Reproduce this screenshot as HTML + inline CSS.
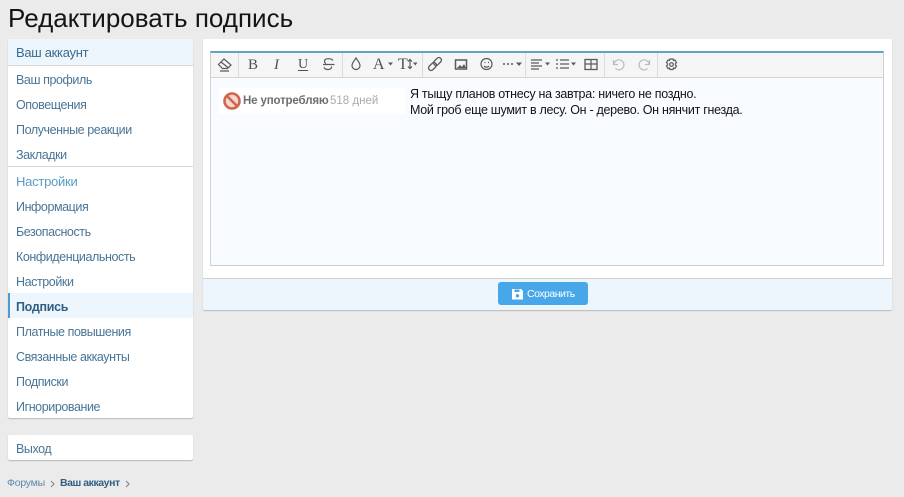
<!DOCTYPE html>
<html><head><meta charset="utf-8"><style>
*{box-sizing:border-box}
html,body{margin:0;padding:0}
body{width:904px;height:497px;background:#ebebeb;position:relative;overflow:hidden;font-family:"Liberation Sans","DejaVu Sans",sans-serif;font-size:13px;color:#141414}
.a{position:absolute;white-space:nowrap}
.card{position:absolute;background:#fff;border-radius:2px;box-shadow:0 1px 1px rgba(0,0,0,.22)}
.n{position:absolute;left:16px;color:#4a7596;font-size:12.5px;letter-spacing:-.42px;line-height:16px;white-space:nowrap}
svg{position:absolute;overflow:visible;fill:none;stroke:#5a5a5a;stroke-width:1.2}
.sep{position:absolute;top:53px;width:1px;height:24px;background:#dcdcdc}
.t{position:absolute;color:#505050;line-height:16px;white-space:nowrap}
</style></head><body>
<div class="a" style="left:8px;top:1px;font-size:26px;line-height:34px;color:#141414">Редактировать подпись</div>

<div class="card" style="left:8px;top:39px;width:185px;height:379px"></div>
<div class="a" style="left:8px;top:39px;width:185px;height:27px;background:#edf6fd;border-bottom:1px solid #d8d8d8"></div>
<div class="n" style="top:45px;color:#396b8e;font-size:13px;letter-spacing:-.3px">Ваш аккаунт</div>
<div class="n" style="top:72px">Ваш профиль</div>
<div class="n" style="top:97px">Оповещения</div>
<div class="n" style="top:122px">Полученные реакции</div>
<div class="n" style="top:147px">Закладки</div>
<div class="a" style="left:8px;top:166px;width:185px;height:1px;background:#d8d8d8"></div>
<div class="n" style="top:174px;color:#5b9ac4;font-size:13px;letter-spacing:-.25px">Настройки</div>
<div class="n" style="top:199px">Информация</div>
<div class="n" style="top:224px">Безопасность</div>
<div class="n" style="top:249px">Конфиденциальность</div>
<div class="n" style="top:274px">Настройки</div>
<div class="a" style="left:8px;top:293px;width:185px;height:25px;background:#edf6fd;border-left:2px solid #4d9ccf"></div>
<div class="n" style="top:299px;font-weight:bold;color:#2f5f85;letter-spacing:-.3px">Подпись</div>
<div class="n" style="top:324px">Платные повышения</div>
<div class="n" style="top:349px">Связанные аккаунты</div>
<div class="n" style="top:374px">Подписки</div>
<div class="n" style="top:399px">Игнорирование</div>

<div class="card" style="left:8px;top:435px;width:185px;height:25px"></div>
<div class="n" style="top:441px">Выход</div>

<div class="a" style="left:7px;top:477px;font-size:10.5px;letter-spacing:-.25px;line-height:13px;color:#5b8aad">Форумы</div>
<div class="a" style="left:60px;top:477px;font-size:10.5px;letter-spacing:-.45px;line-height:13px;font-weight:bold;color:#2f5f85">Ваш аккаунт</div>
<svg style="left:0;top:0;stroke:#8c8c8c" width="904" height="497"><path d="M51 481l3 3-3 3M126 481l3 3-3 3"/></svg>

<div class="card" style="left:203px;top:39px;width:689px;height:271px"></div>
<div class="a" style="left:203px;top:278px;width:689px;height:32px;background:#edf5fd;border-top:1px solid #d0d0d0;border-radius:0 0 2px 2px"></div>
<div class="a" style="left:210px;top:51px;width:674px;height:215px;border:1px solid #cfcfcf;border-top:2px solid #5fa6c4;background:#f8fbff"></div>
<div class="a" style="left:211px;top:53px;width:672px;height:25px;background:#f5f5f5;border-bottom:1px solid #d4d4d4"></div>
<div class="a" style="left:219px;top:88px;width:186px;height:26px;background:#fff"></div>

<div class="sep" style="left:238px"></div><div class="sep" style="left:342px"></div><div class="sep" style="left:422px"></div><div class="sep" style="left:525px"></div><div class="sep" style="left:604px"></div><div class="sep" style="left:657px"></div>

<svg style="left:0;top:0" width="904" height="497">
<path d="M218.500 64.500l5.500-5.500 7 6-3.500 3.500h-5zM221 62l7 5.500M220 71h9"/>
<path d="M333 60.500c-1-1.300-2.500-1.800-4.500-1.800-2.500 0-4 1-4 2.600 0 1 .5 1.800 1.500 2.200M323 64.500h11.500M331.500 66.500c.3 2-1.300 3-3.500 3-2 0-3.500-.7-4-2.200"/>
<path d="M356 58c2 3 4 5 4 7.500a4 4 0 0 1-8 0c0-2.500 2-4.500 4-7.500z"/>
<rect x="-4.500" y="-2.500" width="9" height="5" rx="2.500" transform="translate(432.500 66.500) rotate(-45)" stroke-width="1.300"/>
<rect x="-4.500" y="-2.500" width="9" height="5" rx="2.500" transform="translate(437.500 61.500) rotate(-45)" stroke-width="1.300"/>
<rect x="455.500" y="60" width="11" height="9" stroke-width="1.500"/><path d="M457 68l3-3 2 2 2-3 2 4z" fill="#5a5a5a" stroke="none"/>
<circle cx="486.500" cy="64" r="5.500"/><path d="M484 66c1 1.500 4 1.500 5 0"/><path d="M484.500 62.500h1M488 62.500h1"/>
<path d="M503 64h2M507 64h2M511 64h2" stroke-width="1.600"/>
<path d="M516 62.500h6l-3 3.500zM388 62.500h5l-2.500 3zM413 62.500h4.500l-2.200 3zM545 62.500h5l-2.500 3zM571 62.500h5l-2.500 3z" fill="#5a5a5a" stroke="none"/>
<path d="M531 60h11M531 63h8M531 66h11M531 69h8"/>
<path d="M556 60h2M556 64h2M556 68h2M560 60h9M560 64h9M560 68h9"/>
<path d="M410 59.500v9M408 61.500l2-2 2 2M408 66.500l2 2 2-2"/>
<rect x="585" y="59.500" width="12" height="10" stroke-width="1.300"/><path d="M585 64h12M591 59.500v10"/>
<path d="M613.500 60v4.500h4.500M614 64a5 5 0 1 1 1.500 4.500" stroke="#bbb"/>
<path d="M649.500 60v4.500h-4.500M649 64a5 5 0 1 0-1.500 4.500" stroke="#bbb"/>
<path d="M670 59h3l.5 1.500 1.500-.5 1.500 2.500-1 1v1.500l1 1-1.500 2.500-1.500-.5-.5 1.500h-3l-.5-1.500-1.500.5-1.500-2.500 1-1v-1.500l-1-1 1.500-2.500 1.500.5z"/><circle cx="671.500" cy="64.500" r="1.800"/>
<circle cx="232" cy="101" r="7.500" stroke="#d0654f" stroke-width="2.600" fill="#f3d8d0"/><path d="M227 96l10 10" stroke="#d0654f" stroke-width="2.600"/>
</svg>

<div class="t" style="left:248px;top:57px;font:15px/16px 'Liberation Serif',serif">B</div>
<div class="t" style="left:274px;top:57px;font:italic 15px/16px 'Liberation Serif',serif">I</div>
<div class="t" style="left:298px;top:57px;font:14px/16px 'Liberation Serif',serif;text-decoration:underline;text-underline-offset:2px">U</div>
<div class="t" style="left:373px;top:57px;font:16px/16px 'Liberation Serif',serif">A</div>
<div class="t" style="left:398px;top:57px;font:16px/16px 'Liberation Serif',serif">T</div>

<div class="a" style="left:243px;top:94px;font-size:11.5px;letter-spacing:-.15px;line-height:14px;font-weight:bold;color:#6e6e6e">Не употребляю</div>
<div class="a" style="left:330px;top:94px;font-size:11.5px;line-height:14px;color:#aaa">518 дней</div>
<div class="a" style="left:410px;top:86px;font-size:12.5px;letter-spacing:-.29px;line-height:16px;color:#141414">Я тыщу планов отнесу на завтра: ничего не поздно.<br>Мой гроб еще шумит в лесу. Он - дерево. Он нянчит гнезда.</div>

<div class="a" style="left:498px;top:282px;width:90px;height:23px;background:#47a7e8;border-radius:3px"></div>
<svg style="left:0;top:0;stroke:none" width="904" height="497"><path d="M512 289h9l2 2v8.500h-11z" fill="#fff"/><path d="M514.500 289.500h5v2.500h-5z" fill="#47a7e8"/><circle cx="517.500" cy="295.800" r="1.700" fill="#47a7e8"/></svg>
<div class="a" style="left:527px;top:288px;font-size:10.5px;letter-spacing:-.5px;line-height:13px;color:#fff">Сохранить</div>
</body></html>
